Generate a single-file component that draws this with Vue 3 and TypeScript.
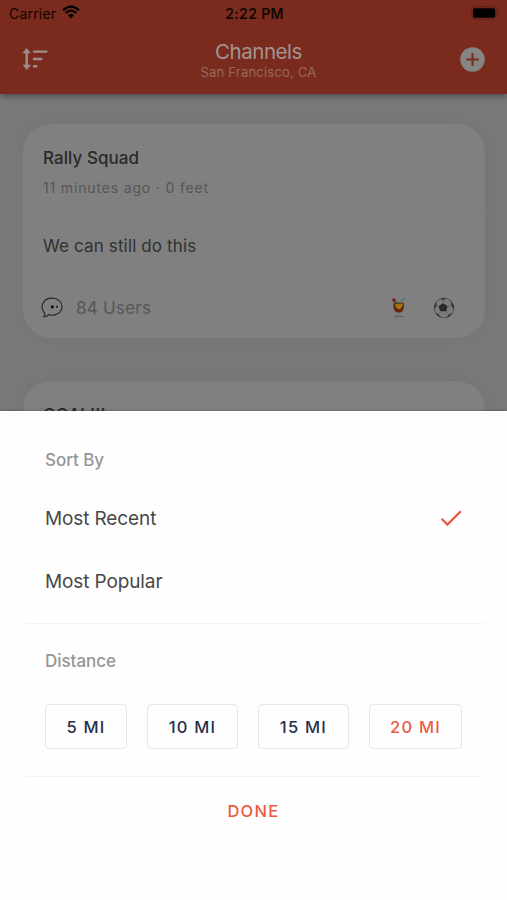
<script setup lang="ts">
import { ref } from 'vue'

type SortKey = 'recent' | 'popular'

const sortOptions: { key: SortKey; label: string }[] = [
  { key: 'recent', label: 'Most Recent' },
  { key: 'popular', label: 'Most Popular' },
]
const distances: number[] = [5, 10, 15, 20]
const sortBy = ref<SortKey>('recent')
const distance = ref<number>(20)
</script>

<template>
  <div class="screen">
    <header class="header">
      <div class="status">
        <div class="carrier">
          <span>Carrier</span>
          <svg class="wifi" viewBox="0 0 18 14" aria-hidden="true">
            <path d="M1 5.2Q9-2 17 5.2" />
            <path d="M3.7 8Q9 3.3 14.3 8" />
            <path class="solid" d="M5.9 10.1Q9 7.7 12.1 10.1L9 13.5Z" />
          </svg>
        </div>
        <span class="time">2:22 PM</span>
        <svg class="battery" viewBox="0 0 29 14" aria-hidden="true">
          <rect class="shell" x=".7" y=".7" width="25" height="12.6" rx="3.6" />
          <rect x="2" y="2.3" width="22.3" height="9.4" rx="1.8" />
          <path class="tip" d="M27 5Q28.6 7 27 9Z" />
        </svg>
      </div>
      <div class="nav">
        <svg class="sort" viewBox="0 0 26 22" aria-hidden="true">
          <path class="arrow" d="M4.7 3V19" />
          <path class="head" d="M4.7.7L8.2 4.9H1.2ZM4.7 21.3L1.2 17.1H8.2Z" />
          <path class="bars" d="M12 3.6H24.4M12 11H19.4M12 18.3H14.4" />
        </svg>
        <div class="heading">
          <h1>Channels</h1>
          <p>San Francisco, CA</p>
        </div>
        <svg class="add" viewBox="0 0 25 25" aria-hidden="true">
          <circle cx="12.5" cy="12.5" r="12.2" />
          <path d="M7 12.5H18M12.5 7V18" />
        </svg>
      </div>
    </header>

    <main class="feed">
      <article class="card">
        <h2>Rally Squad</h2>
        <p class="meta">11 minutes ago · 0 feet</p>
        <div class="rule"></div>
        <p class="message">We can still do this</p>
        <footer class="card-foot">
          <svg class="bubble" viewBox="0 0 22 22" aria-hidden="true">
            <path d="M3.6 16.2C-1.8 9.7 2.2 1.2 11 1.2C17 1.2 21 4.8 21 9.7C21 16 14 19.4 7.6 17.6Q5.5 20.2 2.8 19.6Q4.4 18.2 3.6 16.2Z" />
            <circle cx="11.3" cy="9.8" r="1.65" />
            <circle cx="16" cy="9.8" r="1" />
          </svg>
          <span class="users">84 Users</span>
          <svg class="drink" viewBox="0 0 16 22" aria-hidden="true">
            <path class="straw" d="M9.5 6L11 2.4L14.6 1.4" />
            <path class="glass" d="M2.2 4.6H12.6C14.2 10 13.4 16.2 7.8 16.2S1.2 10 2.2 4.6Z" />
            <path class="juice" d="M2.8 6.5L12.4 6C13.5 11 12 15.4 7.8 15.4S2 11 2.8 6.5Z" />
            <path class="glow" d="M4 7.2L11.4 6.6Q12 10.6 8.6 12.2Q4.4 11.8 4 7.2Z" />
            <circle class="cherry" cx="3" cy="3" r="1.7" />
            <path class="leaf" d="M3.2 4.6L7 5.2L4.6 7.6Z" />
            <path class="stem" d="M3 19.8Q7.8 18.4 12.6 19.8" />
          </svg>
          <svg class="ball" viewBox="0 0 22 22" aria-hidden="true">
            <circle class="sphere" cx="11" cy="11" r="9.9" />
            <path class="seams" d="M10 7V2.6M6 10L2.2 8.5M7.5 14.5L5.2 18M13 14.5L16 17.7M14.4 9.6L18.5 8" />
            <path class="patch" d="M10 6.3L14.4 9L13.4 14.2H7.4L5.5 9.6ZM7.2 1.8L13.3 1.3L10.2 3.2ZM1.3 9L3.7 5L3.3 8.7L1.5 12ZM2.7 16L5.6 17.6L8.1 20.6Q4.8 19.6 2.7 16ZM13.2 20.6L16 17.5L19 16.2Q17 19.8 13.2 20.6ZM18.2 4L20.7 9.3L20.5 12.5L18.3 8Z" />
          </svg>
        </footer>
      </article>
      <article class="card">
        <h2>GOAL!!!</h2>
      </article>
    </main>

    <section class="sheet">
      <h3 class="label">Sort By</h3>
      <div class="options">
        <div v-for="option in sortOptions" :key="option.key" class="option" @click="sortBy = option.key">
          <span>{{ option.label }}</span>
          <svg v-if="sortBy === option.key" class="check" viewBox="0 0 22 18" aria-hidden="true">
            <path d="M1.6 9.8L7.4 15.6L20.8 2.2" />
          </svg>
        </div>
      </div>
      <hr />
      <h3 class="label distance">Distance</h3>
      <div class="chips">
        <button
          v-for="miles in distances"
          :key="miles"
          type="button"
          :class="{ active: distance === miles }"
          @click="distance = miles"
        >{{ miles }} MI</button>
      </div>
      <hr class="second" />
      <button type="button" class="done">DONE</button>
    </section>
  </div>
</template>

<style>
body {
  margin: 0;
}
</style>

<style scoped>
.screen {
  display: flex;
  flex-direction: column;
  width: 507px;
  height: 900px;
  overflow: hidden;
  background: #7a7878;
  font-family: Inter, 'Liberation Sans', sans-serif;
}
h1, h2, h3, p {
  margin: 0;
  font-weight: 400;
}
svg {
  display: block;
  flex: none;
}
.header {
  position: relative;
  flex: none;
  height: 94px;
  background: #7a2b1d;
  box-shadow: 0 2px 7px rgba(0, 0, 0, .4);
}
.status {
  display: grid;
  grid-template-columns: 1fr auto 1fr;
  align-items: center;
  height: 27px;
  padding: 0 7px 0 9px;
  color: #120604;
  font-size: 14px;
}
.carrier {
  display: flex;
  gap: 6px;
  letter-spacing: .2px;
}
.wifi {
  width: 18px;
  height: 14px;
  fill: none;
  stroke: #000;
  stroke-width: 2.2;
}
.wifi .solid {
  fill: #000;
  stroke: none;
}
.time {
  font-weight: 600;
  letter-spacing: .35px;
}
.battery {
  justify-self: end;
  width: 29px;
  height: 14px;
  margin: -1px 0 0;
}
.shell {
  fill: none;
  stroke: #5e2116;
}
.tip {
  fill: #5e2116;
}
.nav {
  display: grid;
  grid-template-columns: 1fr auto 1fr;
  align-items: center;
  height: 64px;
  padding: 0 22px;
}
.sort {
  width: 26px;
  height: 22px;
  stroke: #9b908e;
  stroke-width: 2.4;
  stroke-linecap: round;
}
.sort .head {
  fill: #9b908e;
  stroke-width: .8;
  stroke-linejoin: round;
}
.heading {
  margin: 3px 0 0 10px;
  text-align: center;
}
.heading h1 {
  color: #a09593;
  font-size: 20.5px;
  line-height: 24px;
  letter-spacing: -.45px;
}
.heading p {
  color: #966960;
  font-size: 13px;
  line-height: 17px;
  letter-spacing: .22px;
}
.add {
  justify-self: end;
  width: 25px;
  height: 25px;
}
.add circle {
  fill: #878484;
}
.add path {
  stroke: #7a2b1d;
  stroke-width: 2.1;
  stroke-linecap: round;
}
.feed {
  flex: none;
  display: flex;
  flex-direction: column;
  gap: 43px;
  height: 317px;
  box-sizing: border-box;
  padding: 30px 22px 0 23px;
  overflow: hidden;
}
.card {
  flex: none;
  box-sizing: border-box;
  height: 214px;
  padding: 23px 20px 0;
  border-radius: 28px;
  background: #808080;
  box-shadow: 0 0 12px rgba(120, 108, 106, .35);
}
.card h2 {
  color: #29292a;
  font-size: 17px;
  font-weight: 500;
  line-height: 22px;
  letter-spacing: .05px;
}
.meta {
  margin-top: 9px;
  color: #565656;
  font-size: 14px;
  line-height: 20px;
  letter-spacing: .84px;
}
.rule {
  height: 1px;
  margin: 13px -20px 0 17px;
  background: #7d7d7d;
}
.message {
  margin-top: 23px;
  color: #303030;
  font-size: 17px;
  line-height: 22px;
  letter-spacing: .14px;
}
.card-foot {
  display: flex;
  align-items: center;
  height: 22px;
  margin-top: 40px;
}
.bubble {
  width: 22px;
  height: 22px;
  margin-left: -2px;
  fill: none;
  stroke: #292929;
  stroke-width: 1.2;
}
.bubble circle {
  fill: #111;
  stroke: none;
}
.users {
  margin-left: 13px;
  color: #565656;
  font-size: 17px;
  line-height: 22px;
  letter-spacing: .25px;
}
.drink {
  width: 16px;
  height: 22px;
  margin-left: auto;
}
.glass {
  fill: #6e6a5e;
}
.juice {
  fill: #6b220b;
}
.glow {
  fill: #a07612;
}
.cherry {
  fill: #751711;
}
.leaf {
  fill: #31551e;
}
.straw, .stem {
  fill: none;
  stroke: #5a7176;
  stroke-width: 1.2;
}
.stem {
  stroke: #5a5a5a;
}
.ball {
  width: 22px;
  height: 22px;
  margin: 0 10px 0 26px;
}
.sphere {
  fill: #7b7b7b;
  stroke: #4c4c4c;
  stroke-width: .9;
}
.seams {
  fill: none;
  stroke: #666;
  stroke-width: .9;
}
.patch {
  fill: #2a2a2a;
}
.sheet {
  flex: 1;
  position: relative;
  display: flex;
  flex-direction: column;
  box-sizing: border-box;
  padding: 38px 25px 0;
  background: #fefefe;
  box-shadow: 0 0 3px rgba(0, 0, 0, .35);
}
.label {
  padding-left: 20px;
  color: #969696;
  font-size: 17px;
  font-weight: 500;
  line-height: 22px;
  letter-spacing: -.05px;
}
.options {
  margin-top: 15px;
}
.option {
  display: flex;
  align-items: center;
  justify-content: space-between;
  height: 64px;
  padding: 0 20px;
  color: #484848;
  font-size: 19px;
  letter-spacing: -.12px;
}
.option + .option {
  height: 62px;
}
.check {
  width: 22px;
  height: 18px;
  fill: none;
  stroke: #ec5a3f;
  stroke-width: 2.3;
}
hr {
  width: 459px;
  height: 1px;
  margin: 11px 0 0;
  border: 0;
  background: #f4f4f4;
}
.distance {
  margin-top: 26px;
}
.chips {
  display: grid;
  grid-template-columns: 82px 91px 91px 93px;
  gap: 20px;
  margin: 32px 0 0 20px;
}
button {
  padding: 0;
  border: 0;
  background: none;
  font: inherit;
}
.chips button {
  box-sizing: border-box;
  height: 45px;
  border: 1px solid #e7e7e9;
  border-radius: 4px;
  color: #252f4a;
  font-size: 16.5px;
  font-weight: 500;
  letter-spacing: 1.25px;
}
.chips .active {
  color: #ec5a3f;
}
hr.second {
  width: 456px;
  margin-top: 27px;
}
.done {
  align-self: center;
  height: 24px;
  margin-top: 22px;
  color: #ec5a3f;
  font-size: 16.5px;
  font-weight: 500;
  letter-spacing: 1.3px;
}
</style>
